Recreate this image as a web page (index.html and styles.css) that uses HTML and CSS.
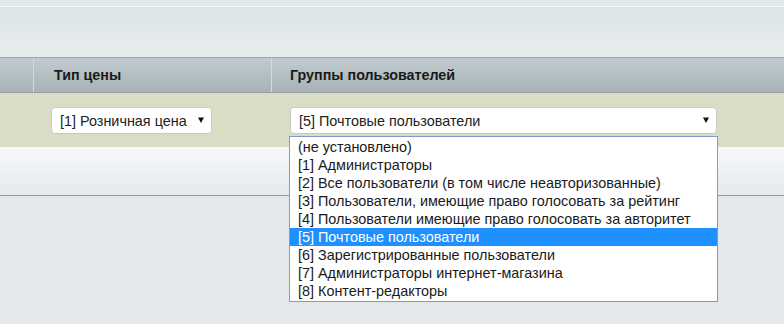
FILE: index.html
```html
<!DOCTYPE html>
<html lang="ru">
<head>
  <meta charset="UTF-8">
  <title>Группы пользователей</title>
  <link rel="stylesheet" href="styles.css">
</head>
<body>
  <div class="topbar"></div>
  <div class="toolbar"></div>

  <div class="grid">
    <div class="row head">
      <div class="cell c-check"></div>
      <div class="cell c-price">Тип цены</div>
      <div class="cell c-groups">Группы пользователей</div>
    </div>
    <div class="row data">
      <div class="cell c-check"></div>
      <div class="cell c-price">
        <div class="select small">
          <span>[1] Розничная цена</span>
          <svg class="arrow" width="6" height="6" viewBox="0 0 6 6"><path d="M0 0.5h6L3 6z" fill="#111"/></svg>
        </div>
      </div>
      <div class="cell c-groups">
        <div class="select wide">
          <span>[5] Почтовые пользователи</span>
          <svg class="arrow" width="6" height="6" viewBox="0 0 6 6"><path d="M0 0.5h6L3 6z" fill="#111"/></svg>
        </div>
        <ul class="options">
          <li>(не установлено)</li>
          <li>[1] Администраторы</li>
          <li>[2] Все пользователи (в том числе неавторизованные)</li>
          <li>[3] Пользователи, имеющие право голосовать за рейтинг</li>
          <li>[4] Пользователи имеющие право голосовать за авторитет</li>
          <li class="selected">[5] Почтовые пользователи</li>
          <li>[6] Зарегистрированные пользователи</li>
          <li>[7] Администраторы интернет-магазина</li>
          <li>[8] Контент-редакторы</li>
        </ul>
      </div>
    </div>
    <div class="row footer"></div>
  </div>
</body>
</html>
```

FILE: styles.css
```css
html, body {
  min-height: 100%;
  height: 100%;
}

body {
  margin: 0;
  font-family: "Liberation Sans", Arial, sans-serif;
  background: #e3e9eb;
  color: #222;
}

.topbar {
  height: 6px;
  background: #e3e9eb;
  border-bottom: 1px solid #fafbfb;
}

.toolbar {
  height: 50px;
  background: linear-gradient(#dde4e7, #e8eded);
}

.grid {
  border-top: 1px solid #98a5a9;
}

.row {
  display: flex;
}

.cell {
  box-sizing: border-box;
}

.c-check {
  width: 34px;
}

.c-price {
  width: 238px;
}

.c-groups {
  flex: 1;
  position: relative;
}

.head {
  height: 34px;
  background: linear-gradient(#c2ccd0, #a6b2b6);
  border-bottom: 1px solid #959fa2;
  font-size: 14.3px;
  font-weight: bold;
  color: #1a1a1a;
}

.head .cell {
  display: flex;
  align-items: center;
  border-right: 1px solid #d3dadc;
}

.head .c-price {
  padding-left: 20px;
}

.head .c-groups {
  border-right: none;
  padding-left: 18px;
}

.data {
  height: 54px;
  background: #dadcc5;
}

.data .c-price {
  padding: 14px 0 0 17px;
}

.data .c-groups {
  padding: 14px 0 0 18px;
}

.select {
  box-sizing: border-box;
  height: 27px;
  display: flex;
  align-items: center;
  justify-content: space-between;
  padding: 0 7px 0 8px;
  background: #fff;
  border: 1px solid #c9cbbe;
  border-radius: 4px;
  font-size: 14.4px;
  color: #222;
}

.select.small {
  width: 161px;
}

.select.wide {
  width: 427px;
}

.arrow {
  display: block;
  margin-top: -1px;
}

.options {
  position: absolute;
  top: 43px;
  left: 17px;
  width: 429px;
  box-sizing: border-box;
  margin: 0;
  padding: 1px 0;
  list-style: none;
  background: #fff;
  border: 1px solid #7f9dc4;
  z-index: 2;
  font-size: 14.4px;
}

.options li {
  height: 18px;
  line-height: 18px;
  padding-left: 8px;
  color: #1a1a1a;
  white-space: nowrap;
}

.options li.selected {
  background: #1e90ff;
  color: #fff;
}

.footer {
  height: 48px;
  background: linear-gradient(#f8f9f9, #e4e9eb);
  border-bottom: 1px solid #8e9ba0;
}
```
